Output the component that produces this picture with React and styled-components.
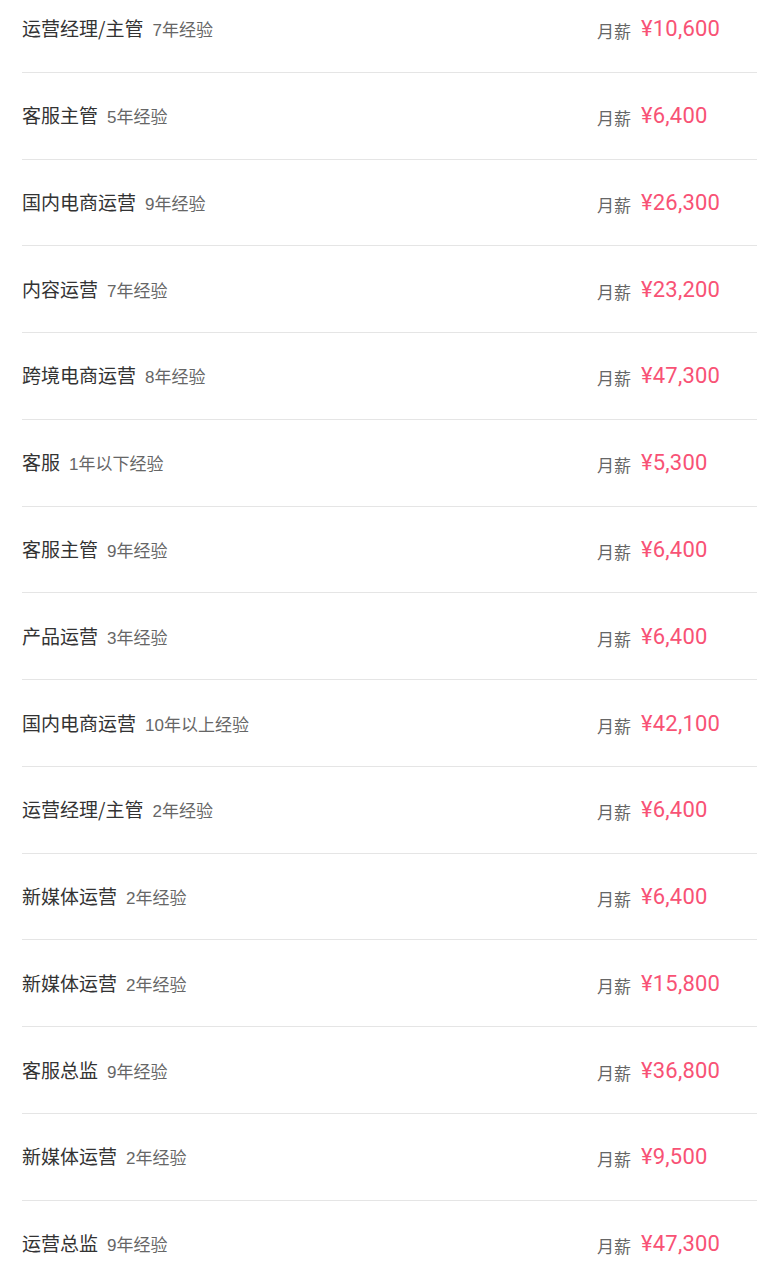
import React from "react";
import styled, { createGlobalStyle } from "styled-components";

const Global = createGlobalStyle`
  html, body { margin: 0; padding: 0; background: #fff; }
  body { font-family: "Noto Sans CJK SC", "Noto Sans", sans-serif; overflow: hidden; }
`;

const List = styled.ul`
  list-style: none;
  margin: -14px 0 0 22px;
  padding: 0;
`;

const Row = styled.li`
  box-sizing: border-box;
  height: 86.77px;
  display: flex;
  align-items: center;
  border-bottom: 1px solid #e5e5e5;
`;

const Info = styled.div`
  flex: 1;
  display: flex;
  align-items: baseline;
  gap: 9px;
  min-width: 0;
  transform: translateY(-1px);
`;

const Title = styled.span`
  font-size: 19px;
  color: #333;
  font-family: "Noto Sans CJK SC", sans-serif;
`;

const Exp = styled.span`
  font-size: 17px;
  color: #666;
  font-family: "Liberation Sans", "Noto Sans CJK SC", sans-serif;
`;

const Salary = styled.div`
  width: 160px;
  display: flex;
  align-items: baseline;
  gap: 10px;
`;

const Label = styled.span`
  font-size: 17px;
  color: #666;
  position: relative;
  top: 2px;
`;

const Value = styled.span`
  font-size: 22px;
  color: #f85275;
  font-family: Roboto, "Noto Sans CJK SC", sans-serif;
  letter-spacing: 0.2px;
`;

const data = [
  ["运营经理/主管", "7年经验", "¥10,600"],
  ["客服主管", "5年经验", "¥6,400"],
  ["国内电商运营", "9年经验", "¥26,300"],
  ["内容运营", "7年经验", "¥23,200"],
  ["跨境电商运营", "8年经验", "¥47,300"],
  ["客服", "1年以下经验", "¥5,300"],
  ["客服主管", "9年经验", "¥6,400"],
  ["产品运营", "3年经验", "¥6,400"],
  ["国内电商运营", "10年以上经验", "¥42,100"],
  ["运营经理/主管", "2年经验", "¥6,400"],
  ["新媒体运营", "2年经验", "¥6,400"],
  ["新媒体运营", "2年经验", "¥15,800"],
  ["客服总监", "9年经验", "¥36,800"],
  ["新媒体运营", "2年经验", "¥9,500"],
  ["运营总监", "9年经验", "¥47,300"],
];

export default function App() {
  return (
    <>
      <Global />
      <List>
        {data.map(([t, e, v], i) => (
          <Row key={i}>
            <Info>
              <Title>{t}</Title>
              <Exp>{e}</Exp>
            </Info>
            <Salary>
              <Label>月薪</Label>
              <Value>{v}</Value>
            </Salary>
          </Row>
        ))}
      </List>
    </>
  );
}
